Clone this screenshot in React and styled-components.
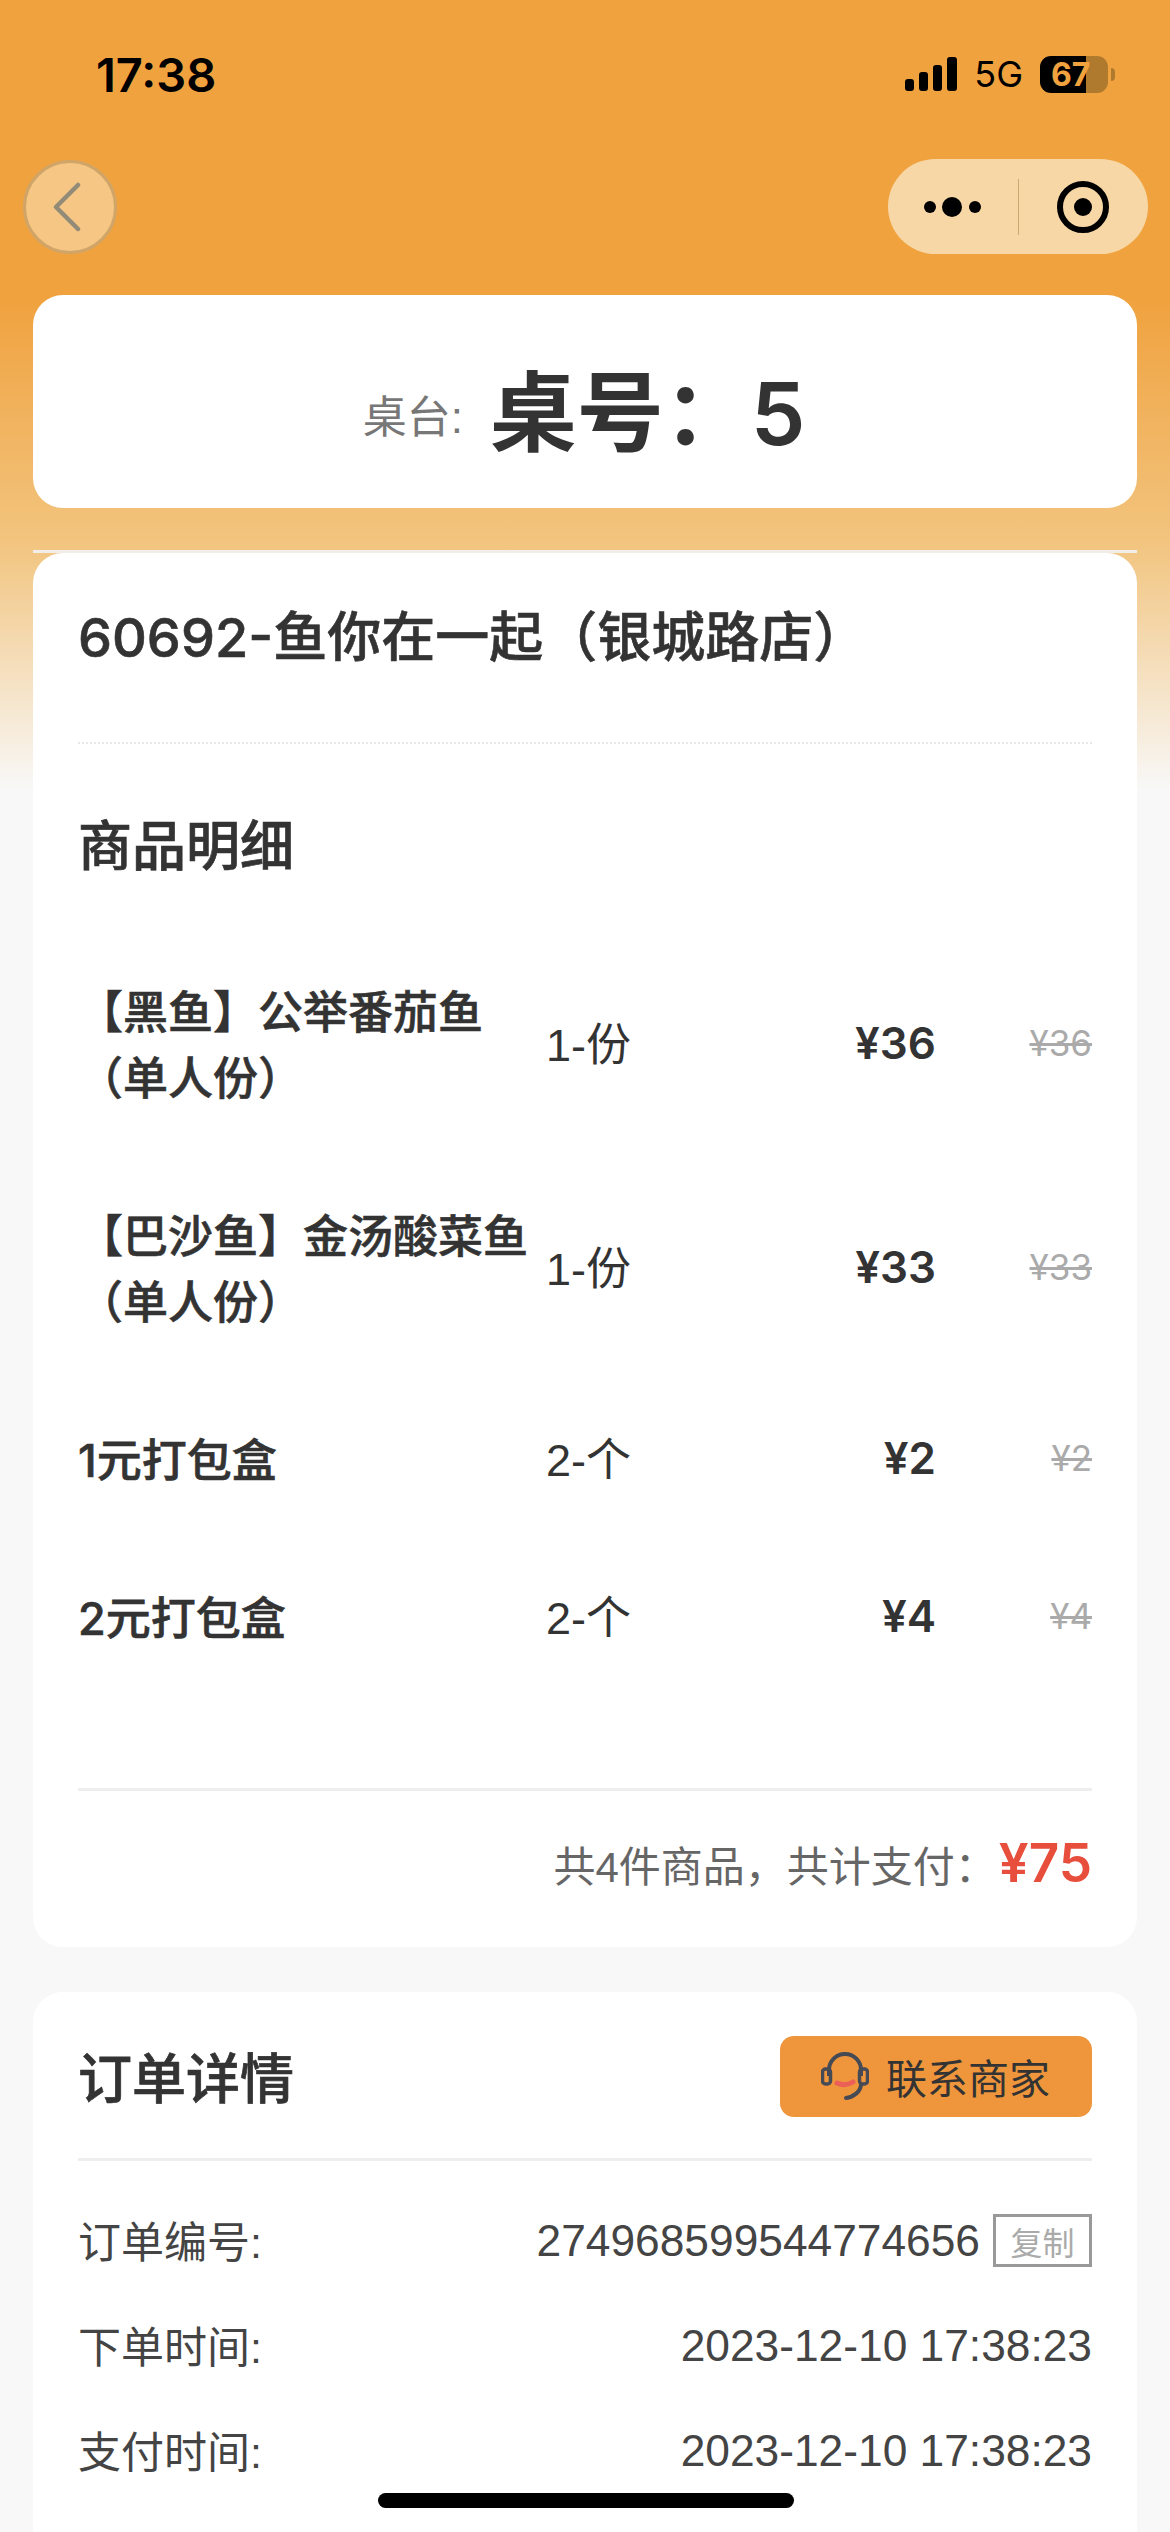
import React from 'react'
import styled, { createGlobalStyle } from 'styled-components'

const GlobalStyle = createGlobalStyle`
  html, body {
    margin: 0;
    padding: 0;
    background: #f8f8f8;
  }
  * {
    box-sizing: border-box;
  }
`

const items = [
  { name: ['【黑鱼】公举番茄鱼', '（单人份）'], qty: '1-份', price: '¥36', origin: '¥36' },
  { name: ['【巴沙鱼】金汤酸菜鱼', '（单人份）'], qty: '1-份', price: '¥33', origin: '¥33' },
  { name: ['1元打包盒'], qty: '2-个', price: '¥2', origin: '¥2' },
  { name: ['2元打包盒'], qty: '2-个', price: '¥4', origin: '¥4' },
]

const details = [
  { label: '订单编号:', value: '274968599544774656', copy: true },
  { label: '下单时间:', value: '2023-12-10 17:38:23' },
  { label: '支付时间:', value: '2023-12-10 17:38:23' },
]

export default function App() {
  return (
    <Page>
      <GlobalStyle />
      <StatusBar>
        <Clock>17:38</Clock>
        <StatusIcons>
          <svg width="52" height="34" viewBox="0 0 52 34">
            <rect x="0" y="22" width="9" height="12" rx="3" fill="#000" />
            <rect x="14" y="15" width="9" height="19" rx="3" fill="#000" />
            <rect x="28" y="8" width="9" height="26" rx="3" fill="#000" />
            <rect x="42" y="0" width="10" height="34" rx="3" fill="#000" />
          </svg>
          <Network>5G</Network>
          <Battery>67</Battery>
          <BatteryCap />
        </StatusIcons>
      </StatusBar>

      <NavBar>
        <BackButton>
          <svg width="30" height="50" viewBox="0 0 30 50">
            <path d="M26 3 L4 25 L26 47" fill="none" stroke="#918b78" strokeWidth="4.5" strokeLinecap="round" strokeLinejoin="round" />
          </svg>
        </BackButton>
        <Capsule>
          <CapsuleSide>
            <svg width="58" height="24" viewBox="0 0 58 24">
              <circle cx="6" cy="12" r="6" fill="#000" />
              <circle cx="28" cy="12" r="10" fill="#000" />
              <circle cx="51" cy="12" r="6" fill="#000" />
            </svg>
          </CapsuleSide>
          <CapsuleLine />
          <CapsuleSide>
            <svg width="54" height="54" viewBox="0 0 54 54">
              <circle cx="27" cy="27" r="23" fill="none" stroke="#000" strokeWidth="6" />
              <circle cx="27" cy="27" r="9" fill="#000" />
            </svg>
          </CapsuleSide>
        </Capsule>
      </NavBar>

      <TableCard>
        <TableLabel>桌台:</TableLabel>
        <TableName>桌号：5</TableName>
      </TableCard>

      <TopLine />

      <Card>
        <StoreName>60692-鱼你在一起（银城路店）</StoreName>
        <DottedLine />
        <SectionTitle>商品明细</SectionTitle>
        <ItemList>
          {items.map((item, i) => (
            <ItemRow key={i}>
              <ItemName>
                {item.name.map((line) => (
                  <div key={line}>{line}</div>
                ))}
              </ItemName>
              <ItemQty>{item.qty}</ItemQty>
              <ItemPrice>{item.price}</ItemPrice>
              <ItemOrigin>{item.origin}</ItemOrigin>
            </ItemRow>
          ))}
        </ItemList>
        <TotalRow>
          <TotalText>共4件商品，共计支付：</TotalText>
          <TotalPrice>¥75</TotalPrice>
        </TotalRow>
      </Card>

      <DetailCard>
        <DetailHeader>
          <DetailTitle>订单详情</DetailTitle>
          <ContactButton>
            <svg width="48" height="49" viewBox="0 0 48 49">
              <path d="M8 24 V18 A16 16 0 0 1 40 18 V24" fill="none" stroke="#454a55" strokeWidth="4" />
              <rect x="1.5" y="17" width="8" height="15" rx="3" fill="none" stroke="#454a55" strokeWidth="3.5" />
              <rect x="38.5" y="17" width="8" height="15" rx="3" fill="none" stroke="#454a55" strokeWidth="3.5" />
              <path d="M40 32 C40 40 32 45 25 46" fill="none" stroke="#454a55" strokeWidth="4" strokeLinecap="round" />
              <path d="M16 31 Q24 35 32 30" fill="none" stroke="#ec5f57" strokeWidth="5" strokeLinecap="round" />
            </svg>
            联系商家
          </ContactButton>
        </DetailHeader>
        {details.map((row) => (
          <DetailRow key={row.label}>
            <DetailLabel>{row.label}</DetailLabel>
            <DetailValue>
              {row.value}
              {row.copy && <CopyTag>复制</CopyTag>}
            </DetailValue>
          </DetailRow>
        ))}
      </DetailCard>

      <HomeBar />
    </Page>
  )
}

const Page = styled.div`
  position: relative;
  width: 1170px;
  height: 2532px;
  overflow: hidden;
  padding: 0 33px;
  background: linear-gradient(#f0a23f 0, #f0a23f 300px, #f2c47e 540px, #f8f8f8 790px);
  font-family: "Liberation Sans", "Noto Sans CJK SC", sans-serif;
  color: #333;
`

const StatusBar = styled.div`
  display: flex;
  justify-content: space-between;
  align-items: center;
  height: 148px;
  padding: 0 22px 0 63px;
  color: #000;
`

const Clock = styled.div`
  font-family: Inter, sans-serif;
  font-size: 47px;
  font-weight: 600;
`

const StatusIcons = styled.div`
  display: flex;
  align-items: center;
`

const Network = styled.div`
  margin: 0 17px 0 17px;
  font-family: Inter, sans-serif;
  font-size: 36px;
`

const Battery = styled.div`
  width: 68px;
  height: 37px;
  padding-left: 11px;
  border-radius: 11px;
  background: linear-gradient(90deg, #000 68%, #b07a2e 68%);
  color: #f0a23f;
  font-family: Inter, sans-serif;
  font-size: 32px;
  line-height: 37px;
  font-weight: 700;
`

const BatteryCap = styled.div`
  width: 4px;
  height: 13px;
  margin-left: 3px;
  border-radius: 0 4px 4px 0;
  background: #b07a2e;
`

const NavBar = styled.div`
  display: flex;
  justify-content: space-between;
  align-items: center;
  height: 95px;
  margin: 11px -11px 0 -10px;
`

const BackButton = styled.div`
  display: flex;
  align-items: center;
  justify-content: center;
  width: 94px;
  height: 94px;
  padding-right: 6px;
  border-radius: 50%;
  border: 3px solid #d0a567;
  background: #f6c684;
`

const Capsule = styled.div`
  display: flex;
  align-items: center;
  width: 260px;
  height: 95px;
  border-radius: 48px;
  background: #f8d7a6;
`

const CapsuleSide = styled.div`
  flex: 1;
  display: flex;
  align-items: center;
  justify-content: center;
`

const CapsuleLine = styled.div`
  width: 1px;
  height: 56px;
  background: #cca873;
`

const Card = styled.section`
  background: #fff;
  border-radius: 30px;
  padding: 50px 45px 0;
  height: 1394px;
`

const TableCard = styled.section`
  display: flex;
  align-items: center;
  justify-content: center;
  height: 213px;
  margin-top: 41px;
  padding-top: 24px;
  padding-right: 2px;
  background: #fff;
  border-radius: 30px;
`

const TableLabel = styled.span`
  width: 127px;
  font-size: 44px;
  color: #777;
`

const TableName = styled.span`
  font-family: Inter, "Noto Sans CJK SC", sans-serif;
  font-size: 87px;
  line-height: 100px;
  font-weight: 600;
`

const TopLine = styled.div`
  height: 3px;
  margin-top: 42px;
  background: #f1eeea;
`

const StoreName = styled.div`
  font-family: Inter, "Noto Sans CJK SC", sans-serif;
  font-size: 54px;
  line-height: 70px;
  font-weight: 500;
  -webkit-text-stroke: 0.6px #333;
`

const DottedLine = styled.div`
  margin-top: 69px;
  border-top: 2px dotted #e8e8e8;
`

const SectionTitle = styled.h2`
  margin: 68px 0 0;
  font-size: 54px;
  line-height: 70px;
  font-weight: 500;
  -webkit-text-stroke: 0.7px #333;
`

const DetailTitle = styled(SectionTitle)`
  margin: 8px 0 0;
`

const ItemList = styled.div`
  margin-top: 49px;
`

const ItemRow = styled.div`
  display: grid;
  grid-template-columns: 468px 150px 240px 1fr;
  align-items: center;
  padding: 46px 0;
`

const ItemName = styled.div`
  margin: 3px 0 -3px;
  font-family: Inter, "Noto Sans CJK SC", sans-serif;
  font-size: 45px;
  line-height: 66px;
  font-weight: 500;
  -webkit-text-stroke: 0.6px #333;
`

const ItemQty = styled.div`
  margin-top: -4px;
  font-size: 45px;
`

const ItemPrice = styled.div`
  text-align: right;
  font-family: Inter, sans-serif;
  font-size: 44px;
  font-weight: 600;
`

const ItemOrigin = styled.div`
  text-align: right;
  font-family: Inter, sans-serif;
  font-size: 35px;
  color: #aaa;
  text-decoration: line-through;
`

const TotalRow = styled.div`
  display: flex;
  justify-content: flex-end;
  align-items: center;
  height: 147px;
  margin-top: 93px;
  border-top: 3px solid #eee;
`

const TotalText = styled.span`
  font-size: 42px;
  color: #666;
`

const TotalPrice = styled.span`
  margin-left: 2px;
  font-family: Inter, sans-serif;
  font-size: 53px;
  font-weight: 600;
  color: #e74e3c;
`

const DetailCard = styled.section`
  margin-top: 45px;
  padding: 45px 45px 0;
  background: #fff;
  border-radius: 30px;
  height: 600px;
`

const DetailHeader = styled.div`
  display: flex;
  justify-content: space-between;
  align-items: center;
  height: 124px;
  padding-bottom: 43px;
  border-bottom: 3px solid #eee;
  margin-bottom: 27px;
`

const ContactButton = styled.div`
  display: flex;
  align-items: center;
  gap: 17px;
  width: 312px;
  height: 81px;
  padding-left: 41px;
  border-radius: 14px;
  background: #ef953b;
  font-size: 41px;
`

const DetailRow = styled.div`
  display: flex;
  justify-content: space-between;
  align-items: center;
  height: 105px;
  font-size: 44.3px;
  color: #444;
`

const DetailLabel = styled.span`
  margin-top: -4px;
  font-size: 43px;
`

const DetailValue = styled.div`
  display: flex;
  align-items: center;
  gap: 13px;
`

const CopyTag = styled.span`
  display: flex;
  align-items: center;
  justify-content: center;
  width: 99px;
  height: 53px;
  border: 3px solid #999;
  font-size: 32px;
  color: #aaa;
`

const HomeBar = styled.div`
  position: absolute;
  left: 378px;
  bottom: 24px;
  width: 416px;
  height: 15px;
  border-radius: 8px;
  background: #000;
`
